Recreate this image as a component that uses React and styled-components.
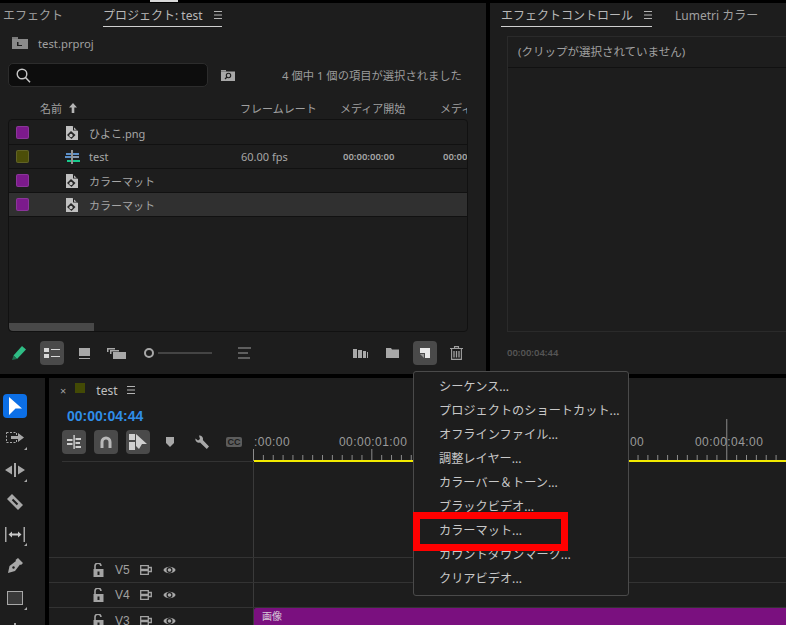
import React from "react";
import styled, { createGlobalStyle } from "styled-components";

const GlobalStyle = createGlobalStyle`
  html, body {
    margin: 0;
    padding: 0;
    background: #000;
  }
  * { box-sizing: border-box; }
`;

const rows = [
  { name: "ひよこ.png", color: "#7c1a8c", type: "still" },
  { name: "test", color: "#4c4e08", type: "seq", fps: "60.00 fps", start: "00:00:00:00", end: "00:00" },
  { name: "カラーマット", color: "#7c1a8c", type: "still" },
  { name: "カラーマット", color: "#7c1a8c", type: "still", selected: true },
];

const menuItems = [
  "シーケンス...",
  "プロジェクトのショートカット...",
  "オフラインファイル...",
  "調整レイヤー...",
  "カラーバー＆トーン...",
  "ブラックビデオ...",
  "カラーマット...",
  "カウントダウンマーク...",
  "クリアビデオ...",
];

const tracks = ["V5", "V4", "V3"];

function Hamburger() {
  return (
    <svg width="8" height="8" viewBox="0 0 8 8">
      <path d="M0 .5h8M0 4h8M0 7.5h8" stroke="#b4b4b4" strokeWidth="1" />
    </svg>
  );
}

function StillIcon() {
  return (
    <svg width="12" height="14" viewBox="0 0 12 14">
      <path d="M0 0h6.500L12 5v9H0z" fill="#c0c0c0" />
      <path d="M7 0l5 4.500H7z" fill="#1d1d1d" />
      <path d="M8 1.500l2.500 2.300H8z" fill="#c0c0c0" />
      <path d="M1 9l4-4 4.500 4-4 4z" fill="#262626" />
      <circle cx="5" cy="9.500" r="1.700" fill="#c0c0c0" />
    </svg>
  );
}

function SeqIcon() {
  return (
    <SeqSvg width="15" height="14" viewBox="0 0 15 14">
      <rect x="1" y="3" width="5" height="2" fill="#5c8fc8" />
      <rect x="0" y="6" width="6" height="2" fill="#5c8fc8" />
      <rect x="8" y="3" width="6" height="2" fill="#5c8fc8" />
      <rect x="8" y="6" width="6" height="2" fill="#8a9ab0" />
      <rect x="2" y="10" width="4" height="2" fill="#18c98c" />
      <rect x="8" y="10" width="7" height="2" fill="#18c98c" />
      <rect x="6.300" y="0" width="1.400" height="14" fill="#c8c8c8" />
    </SeqSvg>
  );
}

function TrackLock() {
  return (
    <svg width="11" height="14" viewBox="0 0 11 14">
      <path d="M2 6V3.500a3 3 0 0 1 6-.5" fill="none" stroke="#a4a4a4" strokeWidth="1.600" />
      <rect x="0.500" y="6" width="10" height="8" fill="#a4a4a4" />
      <rect x="4.500" y="8.500" width="2" height="3.500" fill="#1d1d1d" />
    </svg>
  );
}

function TrackClip() {
  return (
    <svg width="12" height="10" viewBox="0 0 12 10">
      <path d="M.7.7h7.600v3.600H.7zM.7 5.700h7.600v3.600H.7zM8.500 2.500h2.800v4H8.500" fill="none" stroke="#a4a4a4" strokeWidth="1.300" />
    </svg>
  );
}

function TrackEye() {
  return (
    <svg width="13" height="10" viewBox="0 0 13 10">
      <path d="M.3 5C2.800.6 10.200.6 12.700 5 10.200 9.400 2.800 9.400.3 5z" fill="#a8a8a8" />
      <circle cx="6.500" cy="5" r="3" fill="#1d1d1d" />
      <circle cx="6.500" cy="5" r="1.800" fill="#a8a8a8" />
    </svg>
  );
}

function Ruler() {
  const ticks = [];
  for (let i = 0; i < 54; i++) {
    const x = 0.5 + i * 9.86;
    const top = i === 48 ? 0 : i === 12 || i === 0 ? 30 : 36;
    ticks.push(<line key={i} x1={x} x2={x} y1={top} y2={i === 0 ? 42 : 41} stroke="#8c8c8c" strokeWidth="1" />);
  }
  return (
    <RulerTicks width="533" height="42" viewBox="0 0 533 42">
      {ticks}
    </RulerTicks>
  );
}

export default function App() {
  return (
    <Page>
      <GlobalStyle />
      <TopEdge>
        <TopMark />
      </TopEdge>
      <TopRow>
        <Panel>
          <Tabs>
            <Tab>エフェクト</Tab>
            <Tab $active $offset={40}>
              プロジェクト: test
              <Hamburger />
            </Tab>
          </Tabs>
          <PathRow>
            <svg width="16" height="12" viewBox="0 0 16 12">
              <path d="M0 0h6v2H0z" fill="#7a7a7a" />
              <rect y="2" width="16" height="10" fill="#8a8a8a" />
              <path d="M5 5h1.500v3H10v1H5z" fill="#1d1d1d" />
            </svg>
            <PathName>test.prproj</PathName>
          </PathRow>
          <SearchRow>
            <SearchBox>
              <svg width="15" height="15" viewBox="0 0 15 15">
                <circle cx="6" cy="6" r="4.800" fill="none" stroke="#c8c8c8" strokeWidth="1.400" />
                <path d="M9.500 9.500l4.500 4.800" stroke="#c8c8c8" strokeWidth="1.500" />
              </svg>
            </SearchBox>
            <SearchModeIcon width="14" height="11" viewBox="0 0 14 11">
              <path d="M0 0h5v1.500H0z" fill="#9a9a9a" />
              <rect y="1.500" width="14" height="9.500" fill="#a8a8a8" />
              <circle cx="7.500" cy="5.500" r="2.200" fill="none" stroke="#1d1d1d" strokeWidth="1.100" />
              <path d="M6 7l-2 2" stroke="#1d1d1d" strokeWidth="1.200" />
            </SearchModeIcon>
            <SelectionInfo>4 個中 1 個の項目が選択されました</SelectionInfo>
          </SearchRow>
          <ColumnHead>
            <NameHead>
              名前
              <svg width="8" height="10" viewBox="0 0 8 10">
                <path d="M4 0l4 4.500H5.300V10H2.700V4.500H0z" fill="#b4b4b4" />
              </svg>
            </NameHead>
            <span>フレームレート</span>
            <span>メディア開始</span>
            <CutHead>メディ</CutHead>
          </ColumnHead>
          <Table>
            {rows.map((row, i) => (
              <Row key={i} $selected={row.selected}>
                <Swatch $color={row.color} />
                <RowIcon>{row.type === "seq" ? <SeqIcon /> : <StillIcon />}</RowIcon>
                <span>{row.name}</span>
                <span>{row.fps}</span>
                <TimeCell>{row.start}</TimeCell>
                <TimeCell>{row.end}</TimeCell>
              </Row>
            ))}
            <TableSpacer />
            <Scrollbar />
          </Table>
          <Toolbar>
            <ToolSlot $width={16} $ml={11}>
              <svg width="14" height="14" viewBox="0 0 14 14">
                <path d="M10 0l4 3.500L5 13 1.500 9.500z" fill="#2fbd85" />
                <path d="M1.500 9.500L0 14l5-1z" fill="#1f6e50" />
              </svg>
            </ToolSlot>
            <ToolButton $ml={13} $active>
              <svg width="16" height="10" viewBox="0 0 16 10">
                <rect width="5" height="4" fill="#d8d8d8" />
                <rect y="6" width="5" height="4" fill="#d8d8d8" />
                <rect x="7" y="1" width="9" height="1" fill="#d8d8d8" />
                <rect x="7" y="8" width="9" height="1" fill="#d8d8d8" />
              </svg>
            </ToolButton>
            <ToolSlot $width={12} $ml={14}>
              <svg width="11" height="11" viewBox="0 0 11 11">
                <rect width="11" height="8" fill="#a8a8a8" />
                <rect y="10" width="11" height="1" fill="#a8a8a8" />
              </svg>
            </ToolSlot>
            <ToolSlot $width={20} $ml={16}>
              <svg width="19" height="11" viewBox="0 0 19 11">
                <path d="M0 0h8v1.500H1.500V4H0z" fill="#a8a8a8" />
                <path d="M3 2h9v1.500H4.500V6H3z" fill="#a8a8a8" />
                <rect x="6" y="4" width="13" height="7" fill="#a8a8a8" />
              </svg>
            </ToolSlot>
            <SliderKnob />
            <SliderLine />
            <ToolSlot $width={13} $ml={26}>
              <svg width="13" height="12" viewBox="0 0 13 12">
                <rect width="13" height="2" fill="#5e5e5e" />
                <rect y="5" width="10" height="2" fill="#5e5e5e" />
                <rect y="10" width="12" height="2" fill="#5e5e5e" />
              </svg>
            </ToolSlot>
            <ToolSlot $width={15} $ml={102}>
              <svg width="15" height="9" viewBox="0 0 15 9">
                <rect width="4" height="9" fill="#a8a8a8" />
                <rect x="5" y="1" width="4" height="8" fill="#a8a8a8" />
                <rect x="10" y="2" width="3" height="7" fill="#a8a8a8" />
                <rect x="14" y="3" width="1" height="6" fill="#a8a8a8" />
              </svg>
            </ToolSlot>
            <ToolSlot $width={13} $ml={18}>
              <svg width="13" height="10" viewBox="0 0 13 10">
                <path d="M0 0h5l1 1.500h7V10H0z" fill="#a8a8a8" />
              </svg>
            </ToolSlot>
            <ToolButton $ml={14} $active>
              <svg width="10" height="10" viewBox="0 0 10 10">
                <path d="M0 0h10v10H5V5H0z" fill="#e8e8e8" />
                <path d="M0 6h4v4z" fill="#9a9a9a" />
              </svg>
            </ToolButton>
            <ToolSlot $width={13} $ml={13}>
              <svg width="13" height="14" viewBox="0 0 13 14">
                <path d="M4.500 2V.6h4V2M0 2.500h13M1.600 3v10.400h9.800V3" fill="none" stroke="#a0a0a0" strokeWidth="1.100" />
                <path d="M4 5v6.500M6.500 5v6.500M9 5v6.500" stroke="#a0a0a0" strokeWidth="1.300" />
              </svg>
            </ToolSlot>
          </Toolbar>
        </Panel>
        <Panel>
          <Tabs>
            <Tab $active $offset={8}>
              エフェクトコントロール
              <Hamburger />
            </Tab>
            <Tab $offset={23}>Lumetri カラー</Tab>
          </Tabs>
          <EffectBox>
            <EffectNote>(クリップが選択されていません)</EffectNote>
          </EffectBox>
          <EffectTime>00:00:04:44</EffectTime>
        </Panel>
      </TopRow>
      <BottomRow>
        <ToolRail>
          <RailButton $active>
            <svg width="13" height="18" viewBox="0 0 13 18">
              <path d="M0 0l13 11.500H6.500L0 18z" fill="#fff" />
            </svg>
          </RailButton>
          <RailButton $corner>
            <svg width="18" height="12" viewBox="0 0 18 12">
              <rect x=".5" y=".5" width="10" height="10" fill="none" stroke="#a8a8a8" strokeDasharray="2 1.500" />
              <path d="M5 4h7V1l6 4.500-6 4.500V7H5z" fill="#a8a8a8" />
            </svg>
          </RailButton>
          <RailButton $corner>
            <svg width="20" height="14" viewBox="0 0 20 14">
              <rect x="9" width="2" height="14" fill="#a8a8a8" />
              <path d="M0 7l7-4.500v9zM20 7l-7-4.500v9z" fill="#a8a8a8" />
            </svg>
          </RailButton>
          <RailButton>
            <svg width="16" height="16" viewBox="0 0 16 16">
              <path d="M5 0l11 11-5 5L0 5z" fill="#a8a8a8" />
              <path d="M5.500 5.500l5 5" stroke="#1d1d1d" strokeWidth="2" />
            </svg>
          </RailButton>
          <RailButton $corner>
            <svg width="20" height="15" viewBox="0 0 20 15">
              <rect width="1.500" height="15" fill="#a8a8a8" />
              <rect x="18.500" width="1.500" height="15" fill="#a8a8a8" />
              <path d="M3.500 7.500L7 4.500v2h6v-2l3.500 3-3.500 3v-2H7v2z" fill="#c8c8c8" />
            </svg>
          </RailButton>
          <RailButton>
            <svg width="16" height="16" viewBox="0 0 16 16">
              <path d="M11 0l5 5-2 2-1-.5-5 6.500L1 15l1.500-7L9 3l-.5-1z" fill="#a8a8a8" />
              <circle cx="6.500" cy="9.500" r="1.200" fill="#1d1d1d" />
            </svg>
          </RailButton>
          <RailButton $corner>
            <svg width="16" height="14" viewBox="0 0 16 14">
              <rect x=".5" y=".5" width="15" height="13" fill="#3a3a3a" stroke="#a8a8a8" />
            </svg>
          </RailButton>
          <RailButton>
            <svg width="14" height="14" viewBox="0 0 14 14">
              <path d="M4 2v7M7 0v8M10 2v7" stroke="#a8a8a8" strokeWidth="2" />
            </svg>
          </RailButton>
        </ToolRail>
        <Timeline>
          <SequenceTab>
            <CloseMark>×</CloseMark>
            <SequenceSwatch />
            <SequenceName>test</SequenceName>
            <Hamburger />
          </SequenceTab>
          <TimelineHead>
            <HeadControls>
              <Timecode>00:00:04:44</Timecode>
              <ControlRow>
                <ControlButton>
                  <svg width="14" height="14" viewBox="0 0 14 14">
                    <rect x="6.400" width="1.400" height="14" fill="#d0d0d0" />
                    <path d="M0 4h5.500v2H0zM0 8h5.500v2H0zM8.500 3H14v2H8.500zM8.500 7H13v2H8.500zM8.500 11H14v2H8.500z" fill="#d0d0d0" />
                  </svg>
                </ControlButton>
                <ControlButton>
                  <svg width="12" height="12" viewBox="0 0 12 12">
                    <path d="M2 12V6a4 4 0 0 1 8 0v6" fill="none" stroke="#b8b8b8" strokeWidth="3" />
                  </svg>
                </ControlButton>
                <ControlButton>
                  <svg width="18" height="16" viewBox="0 0 18 16">
                    <rect width="6" height="6" fill="#d0d0d0" />
                    <rect y="8" width="6" height="8" fill="#d0d0d0" />
                    <path d="M7 0l11 10h-5l-3 5-3-3z" fill="#d0d0d0" />
                  </svg>
                </ControlButton>
                <PlainControl>
                  <svg width="8" height="10" viewBox="0 0 8 10">
                    <path d="M0 0h8v6l-4 4-4-4z" fill="#a8a8a8" />
                  </svg>
                </PlainControl>
                <PlainControl>
                  <svg width="14" height="14" viewBox="0 0 14 14">
                    <path d="M4 .5a3.500 3.500 0 0 1 3.800 4.600L14 11.500 11.800 14 5 7.600A3.500 3.500 0 0 1 .5 3.500L3 5.500l2-1.500z" fill="#a8a8a8" />
                  </svg>
                </PlainControl>
                <PlainControl>
                  <CaptionMark>CC</CaptionMark>
                </PlainControl>
              </ControlRow>
            </HeadControls>
            <RulerArea>
              <RulerLabels>
                <span>:00:00</span>
                <span>00:00:01:00</span>
                <span>00</span>
                <span>00:00:04:00</span>
              </RulerLabels>
              <Ruler />
              <WorkBar />
            </RulerArea>
          </TimelineHead>
          <EmptyTracks>
            <TrackSide />
            <TrackLane />
          </EmptyTracks>
          {tracks.map((t) => (
            <TrackRow key={t}>
              <TrackSide>
                <TrackLock />
                <TrackLabel>{t}</TrackLabel>
                <TrackClip />
                <TrackEye />
              </TrackSide>
              <TrackLane>{t === "V3" && <Clip>画像</Clip>}</TrackLane>
            </TrackRow>
          ))}
        </Timeline>
      </BottomRow>
      <NewItemMenu>
        {menuItems.map((item) => (
          <MenuItem key={item}>{item}</MenuItem>
        ))}
      </NewItemMenu>
      <Highlight />
    </Page>
  );
}

const Page = styled.div`
  position: relative;
  width: 786px;
  height: 625px;
  overflow: hidden;
  background: #000;
  color: #a6a6a6;
  font-family: "Noto Sans", "Noto Sans CJK JP", sans-serif;
  font-size: 12px;
  display: flex;
  flex-direction: column;
`;
const TopEdge = styled.div`
  height: 3px;
  flex: none;
  padding-left: 150px;
`;
const TopMark = styled.div`
  width: 28px;
  height: 2px;
  background: #d8d8d8;
`;
const TopRow = styled.div`
  display: grid;
  grid-template-columns: 486px 296px;
  gap: 4px;
  height: 371px;
  flex: none;
`;
const BottomRow = styled.div`
  display: grid;
  grid-template-columns: 45px 737px;
  gap: 4px;
  margin-top: 4px;
  flex: 1;
  min-height: 0;
`;
const Panel = styled.section`
  background: #1d1d1d;
  display: flex;
  flex-direction: column;
  min-width: 0;
  overflow: hidden;
`;
const Tabs = styled.div`
  display: flex;
  height: 24px;
  flex: none;
  padding-left: 3px;
`;
const Tab = styled.div`
  margin-left: ${(p) => p.$offset || 0}px;
  height: 24px;
  display: flex;
  align-items: center;
  gap: 11px;
  font-size: 12px;
  white-space: nowrap;
  color: ${(p) => (p.$active ? "#b8b8b8" : "#a0a0a0")};
  border-bottom: ${(p) => (p.$active ? "1px solid #d0d0d0" : "none")};
`;
const PathRow = styled.div`
  display: flex;
  align-items: center;
  gap: 10px;
  padding-left: 12px;
  margin-top: 10px;
  height: 12px;
`;
const PathName = styled.span`
  font-size: 11.3px;
  color: #a0a0a0;
`;
const SearchRow = styled.div`
  display: flex;
  align-items: center;
  margin: 14px 0 0 8px;
  height: 24px;
`;
const SearchModeIcon = styled.svg`
  margin-left: 13px;
  flex: none;
`;
const SearchBox = styled.div`
  width: 200px;
  height: 24px;
  background: #0d0d0d;
  border: 1px solid #2c2c2c;
  border-radius: 5px;
  display: flex;
  align-items: center;
  padding-left: 7px;
`;
const SelectionInfo = styled.span`
  margin-left: 47px;
  font-size: 11.3px;
  color: #9c9c9c;
  white-space: nowrap;
`;
const ColumnHead = styled.div`
  display: grid;
  grid-template-columns: 200px 100px 100px 27px;
  height: 32px;
  padding: 10px 0 0 40px;
  align-items: center;
  font-size: 11px;
  white-space: nowrap;
  color: #a0a0a0;
`;
const NameHead = styled.div`
  display: flex;
  align-items: center;
  gap: 7px;
`;
const CutHead = styled.span`
  overflow: hidden;
`;
const Table = styled.div`
  margin-left: 8px;
  width: 460px;
  height: 213px;
  padding-top: 1px;
  border: 1px solid #111;
  border-radius: 4px;
  display: flex;
  flex-direction: column;
  overflow: hidden;
`;
const Row = styled.div`
  display: grid;
  grid-template-columns: 57px 23px 152px 102px 100px 1fr;
  align-items: center;
  height: 24px;
  flex: none;
  border-bottom: 1px solid #111;
  background: ${(p) => (p.$selected ? "#303030" : "transparent")};
  font-size: 11px;
  white-space: nowrap;
  color: #a6a6a6;
`;
const Swatch = styled.div`
  width: 13px;
  height: 13px;
  margin-left: 7px;
  border-radius: 2px;
  background: ${(p) => p.$color};
  border: 1px solid rgba(255, 255, 255, 0.12);
`;
const RowIcon = styled.div`
  display: flex;
  align-items: center;
`;
const SeqSvg = styled.svg`
  margin-left: -1px;
`;
const TimeCell = styled.span`
  font-size: 9.5px;
  font-weight: 600;
  overflow: hidden;
`;
const TableSpacer = styled.div`
  flex: 1;
`;
const Scrollbar = styled.div`
  width: 85px;
  height: 8px;
  flex: none;
  background: #484848;
  border-bottom-left-radius: 4px;
`;
const Toolbar = styled.div`
  display: flex;
  align-items: center;
  height: 24px;
  margin-top: 9px;
`;
const ToolSlot = styled.div`
  width: ${(p) => p.$width}px;
  margin-left: ${(p) => p.$ml}px;
  flex: none;
  display: flex;
  align-items: center;
  justify-content: center;
`;
const ToolButton = styled.div`
  width: 24px;
  height: 24px;
  margin-left: ${(p) => p.$ml}px;
  flex: none;
  display: flex;
  align-items: center;
  justify-content: center;
  border-radius: 4px;
  background: ${(p) => (p.$active ? "#4a4a4a" : "transparent")};
`;
const SliderKnob = styled.div`
  width: 10px;
  height: 10px;
  margin-left: 18px;
  flex: none;
  border: 2px solid #a8a8a8;
  border-radius: 50%;
`;
const SliderLine = styled.div`
  width: 54px;
  height: 2px;
  margin-left: 4px;
  flex: none;
  background: #444;
`;
const EffectBox = styled.div`
  margin: 9px 0 0 17px;
  height: 296px;
  border: 1px solid #2a2a2a;
  border-right: none;
`;
const EffectNote = styled.div`
  height: 31px;
  line-height: 30px;
  padding-left: 10px;
  border-bottom: 1px solid #111;
  font-size: 11.5px;
  color: #a0a0a0;
`;
const EffectTime = styled.div`
  margin: 14px 0 0 17px;
  font-size: 9.5px;
  font-weight: 600;
  color: #555;
`;
const ToolRail = styled.aside`
  background: #1d1d1d;
  display: flex;
  flex-direction: column;
  align-items: flex-start;
  padding: 16px 0 0 3px;
  gap: 8px;
  overflow: hidden;
`;
const RailButton = styled.div`
  position: relative;
  width: 24px;
  height: 24px;
  flex: none;
  display: flex;
  align-items: center;
  justify-content: center;
  border-radius: 4px;
  background: ${(p) => (p.$active ? "#0c6fe6" : "transparent")};
  &::after {
    content: "";
    display: ${(p) => (p.$corner ? "block" : "none")};
    position: absolute;
    right: 0;
    bottom: 0;
    border-style: solid;
    border-width: 0 0 3px 3px;
    border-color: transparent transparent #a8a8a8 transparent;
  }
`;
const Timeline = styled.main`
  background: #1d1d1d;
  display: flex;
  flex-direction: column;
  min-width: 0;
`;
const SequenceTab = styled.div`
  display: flex;
  align-items: center;
  height: 24px;
  flex: none;
  padding-left: 11px;
`;
const CloseMark = styled.span`
  font-size: 11px;
  color: #a0a0a0;
`;
const SequenceSwatch = styled.div`
  width: 10px;
  height: 10px;
  margin: -4px 0 0 9px;
  background: #434a05;
`;
const SequenceName = styled.span`
  margin: 0 10px 0 11px;
  font-size: 12px;
  color: #c0c0c0;
`;
const TimelineHead = styled.div`
  display: grid;
  grid-template-columns: 204px 533px;
  height: 60px;
  flex: none;
`;
const HeadControls = styled.div`
  margin-left: 13px;
  border-bottom: 1px solid #333;
`;
const Timecode = styled.div`
  height: 28px;
  line-height: 28px;
  padding-left: 5px;
  font-family: "Liberation Sans", sans-serif;
  font-size: 14px;
  font-weight: 700;
  color: #2f8de8;
`;
const ControlRow = styled.div`
  display: flex;
  align-items: center;
  gap: 8px;
`;
const ControlButton = styled.div`
  width: 24px;
  height: 24px;
  display: flex;
  align-items: center;
  justify-content: center;
  border-radius: 4px;
  background: #4a4a4a;
`;
const PlainControl = styled.div`
  width: 24px;
  height: 24px;
  display: flex;
  align-items: center;
  justify-content: center;
`;
const CaptionMark = styled.span`
  width: 16px;
  height: 10px;
  line-height: 10px;
  border-radius: 2px;
  background: #5c5c5c;
  color: #1d1d1d;
  font-family: "Liberation Sans", sans-serif;
  font-size: 9px;
  font-weight: 700;
  text-align: center;
`;
const RulerArea = styled.div`
  position: relative;
  display: flex;
  flex-direction: column;
  justify-content: flex-end;
`;
const RulerLabels = styled.div`
  position: absolute;
  left: 1px;
  bottom: 13px;
  width: 100%;
  display: grid;
  grid-template-columns: 85px 291px 65px 1fr;
  font-family: "Liberation Sans", sans-serif;
  font-size: 12px;
  letter-spacing: 0.45px;
  color: #9a9a9a;
  white-space: nowrap;
`;
const RulerTicks = styled.svg`
  display: block;
  flex: none;
  margin-bottom: -1px;
`;
const WorkBar = styled.div`
  height: 2px;
  flex: none;
  margin-left: 1px;
  background: #f2ea00;
  position: relative;
`;
const EmptyTracks = styled.div`
  display: grid;
  grid-template-columns: 204px 533px;
  height: 96px;
  flex: none;
  border-bottom: 1px solid #333;
`;
const TrackRow = styled.div`
  display: grid;
  grid-template-columns: 204px 533px;
  height: 25px;
  flex: none;
  border-bottom: 1px solid #333;
`;
const TrackSide = styled.div`
  display: flex;
  align-items: center;
  gap: 11px;
  padding-left: 44px;
`;
const TrackLabel = styled.span`
  width: 14px;
  font-family: "Liberation Sans", sans-serif;
  font-size: 12px;
  color: #a0a0a0;
`;
const TrackLane = styled.div`
  border-left: 1px solid #3a3a3a;
`;
const Clip = styled.div`
  height: 25px;
  padding-left: 8px;
  background: #7a107f;
  border-radius: 2px 0 0 0;
  font-size: 10px;
  line-height: 17px;
  color: #d8c8d8;
`;
const NewItemMenu = styled.div`
  position: absolute;
  left: 413px;
  top: 371px;
  width: 216px;
  height: 225px;
  padding: 3px 0 0 25px;
  background: #1d1d1d;
  border: 1px solid #4a4a4a;
  border-radius: 3px;
`;
const MenuItem = styled.div`
  height: 24px;
  line-height: 24px;
  font-size: 12.2px;
  white-space: nowrap;
  color: #c8c8c8;
`;
const Highlight = styled.div`
  position: absolute;
  left: 413px;
  top: 512px;
  width: 155px;
  height: 39px;
  border: 7px solid #ff0000;
`;
